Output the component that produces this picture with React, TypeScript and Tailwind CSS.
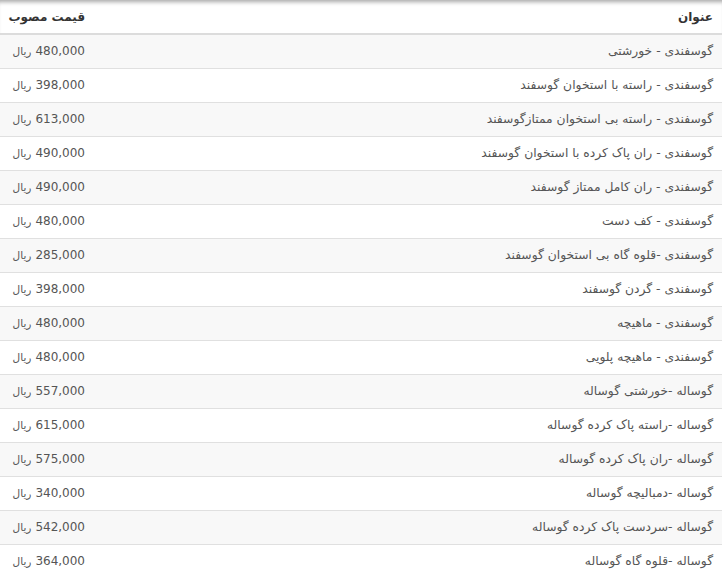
const rows: [string, string][] = [
  ["گوسفندی - خورشتی", "480,000"],
  ["گوسفندی - راسته با استخوان گوسفند", "398,000"],
  ["گوسفندی - راسته بی استخوان ممتازگوسفند", "613,000"],
  ["گوسفندی - ران پاک کرده با استخوان گوسفند", "490,000"],
  ["گوسفندی - ران کامل ممتاز گوسفند", "490,000"],
  ["گوسفندی - کف دست", "480,000"],
  ["گوسفندی -قلوه گاه بی استخوان گوسفند", "285,000"],
  ["گوسفندی - گردن گوسفند", "398,000"],
  ["گوسفندی - ماهیچه", "480,000"],
  ["گوسفندی - ماهیچه پلویی", "480,000"],
  ["گوساله -خورشتی گوساله", "557,000"],
  ["گوساله -راسته پاک کرده گوساله", "615,000"],
  ["گوساله -ران پاک کرده گوساله", "575,000"],
  ["گوساله -دمبالیچه گوساله", "340,000"],
  ["گوساله -سردست پاک کرده گوساله", "542,000"],
  ["گوساله -قلوه گاه گوساله", "364,000"],
];

export default function App() {
  return (
    <div className="w-[728px] h-[577px] overflow-hidden bg-white" style={{ fontFamily: '"DejaVu Sans", Tahoma, sans-serif' }}>
      <div dir="rtl" className="w-[722px]">
        <table className="w-full table-fixed border-collapse text-[12px] text-[#555]">
          <thead>
            <tr className="h-[34px] border-b-2 border-[#dcdcdc] bg-white shadow-[inset_0_5px_4px_-3px_rgba(0,0,0,0.35)]">
              <th className="pr-[9px] text-right font-bold text-[12px] text-[#333]">عنوان</th>
              <th className="w-[94px] pr-[9px] text-right font-bold text-[12px] text-[#333]">قیمت مصوب</th>
            </tr>
          </thead>
          <tbody>
            {rows.map(([title, price], i) => (
              <tr key={i} className={`h-[34px] border-b border-[#e0e0e0] ${i % 2 === 0 ? "bg-[#f8f8f8]" : "bg-white"}`}>
                <td className="pr-[9px] text-right text-[12.3px]">{title}</td>
                <td className="pr-[9px] text-right whitespace-nowrap">
                  <span className="tracking-[-0.3px]">{price}</span>
                  <span className="inline-block w-[4px]" />
                  <span className="text-[10.5px]">ریال</span>
                </td>
              </tr>
            ))}
          </tbody>
        </table>
      </div>
    </div>
  );
}
